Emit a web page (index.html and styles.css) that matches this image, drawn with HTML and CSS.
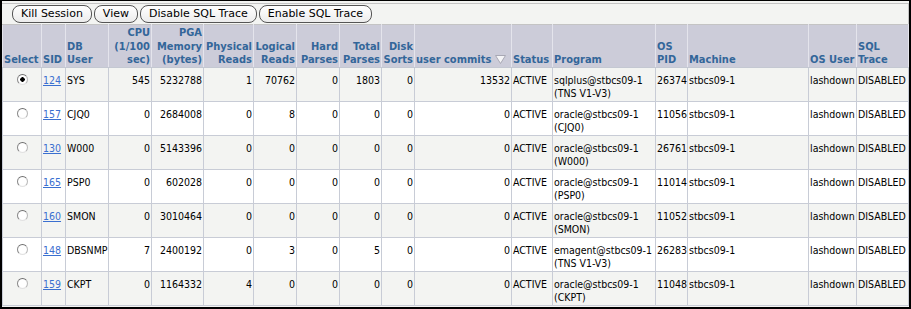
FILE: index.html
```html
<!DOCTYPE html>
<html lang="en">
<head>
    <meta charset="UTF-8">
    <meta name="viewport" content="width=device-width, initial-scale=1.0">
    <title>Sessions</title>
    <link rel="stylesheet" href="styles.css">
</head>
<body>
    <div class="frame">
        <div class="panel">
            <div class="toolbar">
                <button class="btn">Kill Session</button>
                <button class="btn">View</button>
                <button class="btn">Disable SQL Trace</button>
                <button class="btn">Enable SQL Trace</button>
            </div>
            <table class="sessions">
                <colgroup>
                    <col class="c-select">
                    <col class="c-sid">
                    <col class="c-user">
                    <col class="c-cpu">
                    <col class="c-pga">
                    <col class="c-phys">
                    <col class="c-log">
                    <col class="c-hard">
                    <col class="c-total">
                    <col class="c-disk">
                    <col class="c-commits">
                    <col class="c-status">
                    <col class="c-program">
                    <col class="c-pid">
                    <col class="c-machine">
                    <col class="c-osuser">
                    <col class="c-trace">
                </colgroup>
                <thead>
                    <tr>
                        <th>Select</th>
                        <th>SID</th>
                        <th>DB<br>User</th>
                        <th class="num">CPU<br>(1/100<br>sec)</th>
                        <th class="num">PGA<br>Memory<br>(bytes)</th>
                        <th class="num">Physical<br>Reads</th>
                        <th class="num">Logical<br>Reads</th>
                        <th class="num">Hard<br>Parses</th>
                        <th class="num">Total<br>Parses</th>
                        <th class="num">Disk<br>Sorts</th>
                        <th>user commits <svg class="sort" width="11" height="9" viewBox="0 0 11 9"><polygon points="0.5,0.5 10.5,0.5 5.5,8.5" fill="#f4f4f6" stroke="#a8a8b4" stroke-width="1"/></svg></th>
                        <th>Status</th>
                        <th>Program</th>
                        <th>OS<br>PID</th>
                        <th>Machine</th>
                        <th>OS User</th>
                        <th>SQL<br>Trace</th>
                    </tr>
                </thead>
                <tbody>
                    <tr>
                        <td class="sel"><input type="radio" name="sid" checked></td>
                        <td><a href="#">124</a></td>
                        <td>SYS</td>
                        <td class="num">545</td>
                        <td class="num">5232788</td>
                        <td class="num">1</td>
                        <td class="num">70762</td>
                        <td class="num">0</td>
                        <td class="num">1803</td>
                        <td class="num">0</td>
                        <td class="num">13532</td>
                        <td>ACTIVE</td>
                        <td>sqlplus@stbcs09-1<br>(TNS V1-V3)</td>
                        <td>26374</td>
                        <td>stbcs09-1</td>
                        <td>lashdown</td>
                        <td>DISABLED</td>
                    </tr>
                    <tr>
                        <td class="sel"><input type="radio" name="sid"></td>
                        <td><a href="#">157</a></td>
                        <td>CJQ0</td>
                        <td class="num">0</td>
                        <td class="num">2684008</td>
                        <td class="num">0</td>
                        <td class="num">8</td>
                        <td class="num">0</td>
                        <td class="num">0</td>
                        <td class="num">0</td>
                        <td class="num">0</td>
                        <td>ACTIVE</td>
                        <td>oracle@stbcs09-1<br>(CJQ0)</td>
                        <td>11056</td>
                        <td>stbcs09-1</td>
                        <td>lashdown</td>
                        <td>DISABLED</td>
                    </tr>
                    <tr>
                        <td class="sel"><input type="radio" name="sid"></td>
                        <td><a href="#">130</a></td>
                        <td>W000</td>
                        <td class="num">0</td>
                        <td class="num">5143396</td>
                        <td class="num">0</td>
                        <td class="num">0</td>
                        <td class="num">0</td>
                        <td class="num">0</td>
                        <td class="num">0</td>
                        <td class="num">0</td>
                        <td>ACTIVE</td>
                        <td>oracle@stbcs09-1<br>(W000)</td>
                        <td>26761</td>
                        <td>stbcs09-1</td>
                        <td>lashdown</td>
                        <td>DISABLED</td>
                    </tr>
                    <tr>
                        <td class="sel"><input type="radio" name="sid"></td>
                        <td><a href="#">165</a></td>
                        <td>PSP0</td>
                        <td class="num">0</td>
                        <td class="num">602028</td>
                        <td class="num">0</td>
                        <td class="num">0</td>
                        <td class="num">0</td>
                        <td class="num">0</td>
                        <td class="num">0</td>
                        <td class="num">0</td>
                        <td>ACTIVE</td>
                        <td>oracle@stbcs09-1<br>(PSP0)</td>
                        <td>11014</td>
                        <td>stbcs09-1</td>
                        <td>lashdown</td>
                        <td>DISABLED</td>
                    </tr>
                    <tr>
                        <td class="sel"><input type="radio" name="sid"></td>
                        <td><a href="#">160</a></td>
                        <td>SMON</td>
                        <td class="num">0</td>
                        <td class="num">3010464</td>
                        <td class="num">0</td>
                        <td class="num">0</td>
                        <td class="num">0</td>
                        <td class="num">0</td>
                        <td class="num">0</td>
                        <td class="num">0</td>
                        <td>ACTIVE</td>
                        <td>oracle@stbcs09-1<br>(SMON)</td>
                        <td>11052</td>
                        <td>stbcs09-1</td>
                        <td>lashdown</td>
                        <td>DISABLED</td>
                    </tr>
                    <tr>
                        <td class="sel"><input type="radio" name="sid"></td>
                        <td><a href="#">148</a></td>
                        <td>DBSNMP</td>
                        <td class="num">7</td>
                        <td class="num">2400192</td>
                        <td class="num">0</td>
                        <td class="num">3</td>
                        <td class="num">0</td>
                        <td class="num">5</td>
                        <td class="num">0</td>
                        <td class="num">0</td>
                        <td>ACTIVE</td>
                        <td>emagent@stbcs09-1<br>(TNS V1-V3)</td>
                        <td>26283</td>
                        <td>stbcs09-1</td>
                        <td>lashdown</td>
                        <td>DISABLED</td>
                    </tr>
                    <tr>
                        <td class="sel"><input type="radio" name="sid"></td>
                        <td><a href="#">159</a></td>
                        <td>CKPT</td>
                        <td class="num">0</td>
                        <td class="num">1164332</td>
                        <td class="num">4</td>
                        <td class="num">0</td>
                        <td class="num">0</td>
                        <td class="num">0</td>
                        <td class="num">0</td>
                        <td class="num">0</td>
                        <td>ACTIVE</td>
                        <td>oracle@stbcs09-1<br>(CKPT)</td>
                        <td>11048</td>
                        <td>stbcs09-1</td>
                        <td>lashdown</td>
                        <td>DISABLED</td>
                    </tr>
                </tbody>
            </table>
        </div>
    </div>
</body>
</html>
```

FILE: styles.css
```css
html, body {
    margin: 0;
    padding: 0;
}
body {
    background-color: #f3f4f2;
    font-family: "DejaVu Sans Condensed", "DejaVu Sans", sans-serif;
    font-stretch: condensed;
    font-size: 10.5px;
}
.frame {
    box-sizing: border-box;
    width: 911px;
    height: 309px;
    border-style: solid;
    border-color: #000;
    border-width: 1px 2px 2px 2px;
    overflow: hidden;
    background-color: #f3f4f2;
}
.panel {
    margin-top: 2px;
    border-top: 1px solid #c4c4c4;
    border-right: 1px solid #c4c4c4;
}
.toolbar {
    display: flex;
    gap: 2px;
    padding: 1px 0 1px 10px;
}
.btn {
    height: 18px;
    padding: 0 8px;
    font-family: "DejaVu Sans", sans-serif;
    font-stretch: normal;
    font-size: 11px;
    line-height: 16px;
    color: #000;
    background: linear-gradient(#ffffff, #ececec);
    border: 1px solid #555;
    border-radius: 8px;
    cursor: pointer;
}
.sessions {
    width: 100%;
    table-layout: fixed;
    border-collapse: collapse;
}
.sessions th,
.sessions td {
    padding: 0 1px;
    text-align: left;
    white-space: nowrap;
}
.sessions th {
    background-color: #ccccd9;
    color: #336699;
    font-weight: bold;
    font-size: 11px;
    line-height: 13.5px;
    vertical-align: bottom;
    height: 40px;
    padding-top: 1px;
    border: 1px solid #e4e4ec;
    border-top-color: #c4c4c4;
    border-bottom-color: #c4c8d2;
}
.sessions td {
    vertical-align: top;
    line-height: 13px;
    padding-top: 6px;
    padding-bottom: 1px;
    border: 1px solid #c8ccd6;
    height: 26px;
}
.sessions tbody tr:nth-child(odd) {
    background-color: #f3f4f2;
}
.sessions tbody tr:nth-child(even) {
    background-color: #ffffff;
}
.sessions .num {
    text-align: right;
}
.sessions td.sel {
    text-align: center;
}
.sessions a {
    color: #3a6fd0;
    text-decoration: underline;
}
.sort {
    vertical-align: -1px;
}
.sessions input[type="radio"] {
    appearance: none;
    -webkit-appearance: none;
    box-sizing: border-box;
    width: 11px;
    height: 11px;
    margin: 0;
    border-radius: 50%;
    border: 1px solid;
    border-color: #6e6e6e #b8b8b8 #e2e2e2 #8a8a8a;
    background: radial-gradient(circle, #ffffff 60%, #dcdcdc 100%);
}
.sessions input[type="radio"]:checked {
    background: radial-gradient(circle, #000 0 2px, #ffffff 2.5px 60%, #dcdcdc 100%);
}

.c-select { width: 39px; }
.c-sid { width: 24px; }
.c-user { width: 43px; }
.c-cpu { width: 43px; }
.c-pga { width: 52px; }
.c-phys { width: 50px; }
.c-log { width: 43px; }
.c-hard { width: 43px; }
.c-total { width: 42px; }
.c-disk { width: 33px; }
.c-commits { width: 97px; }
.c-status { width: 41px; }
.c-program { width: 103px; }
.c-pid { width: 32px; }
.c-machine { width: 121px; }
.c-osuser { width: 48px; }
.c-trace { width: 52px; }
```
